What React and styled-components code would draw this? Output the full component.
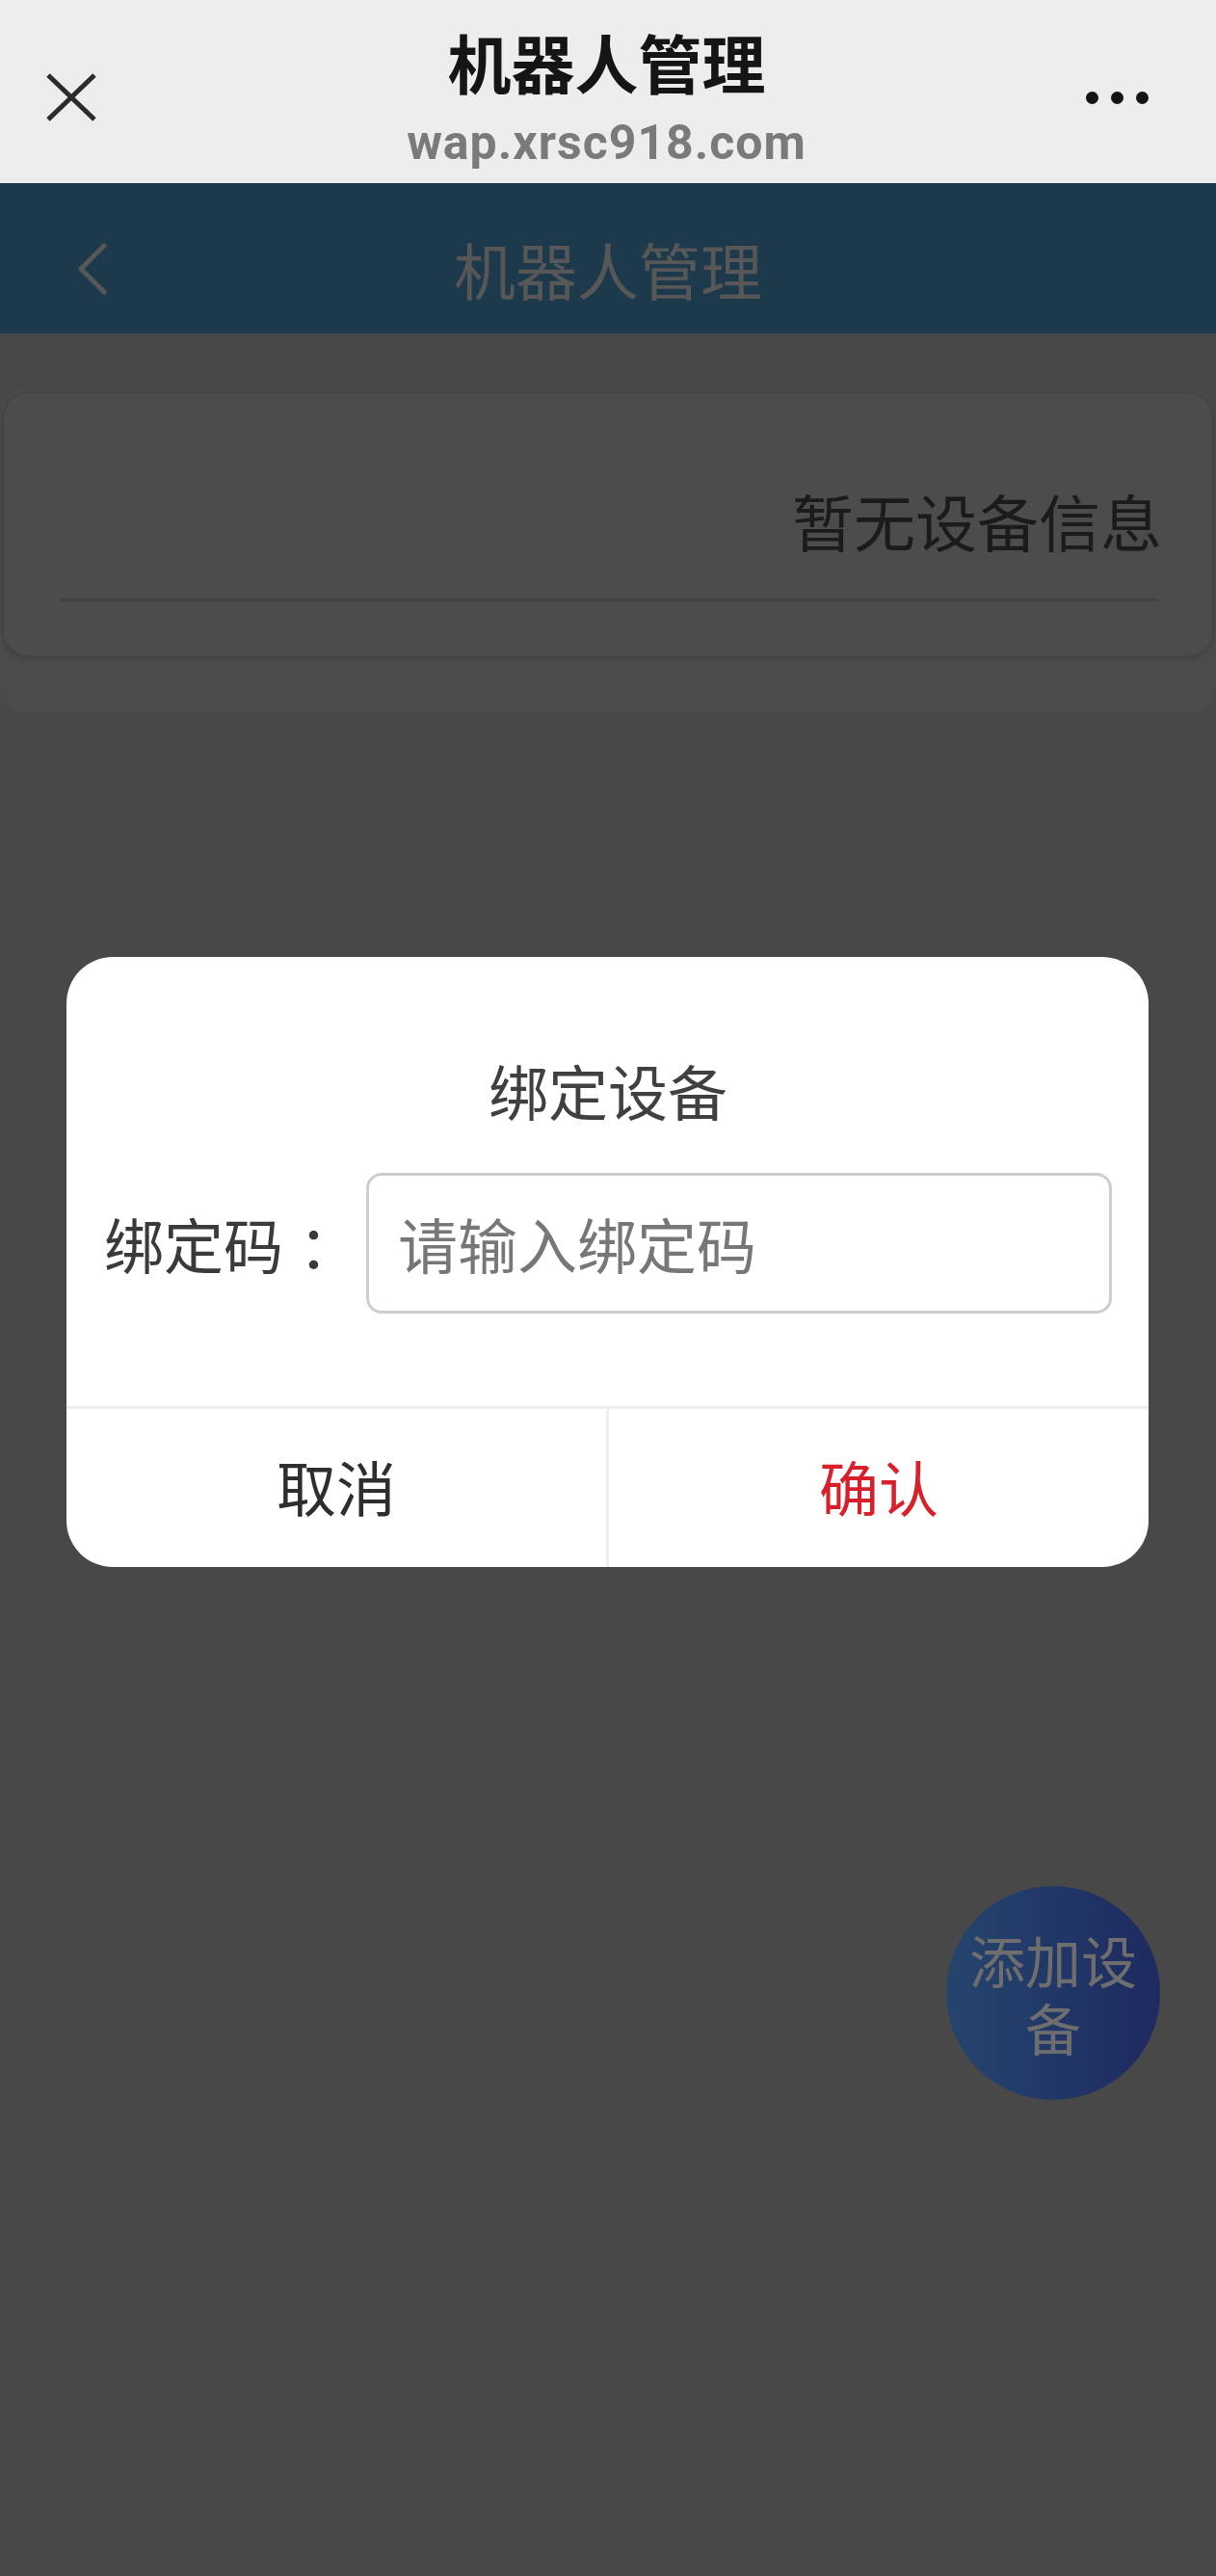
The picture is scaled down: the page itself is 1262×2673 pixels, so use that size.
import React from "react"
import styled, { createGlobalStyle } from "styled-components"

const GlobalStyle = createGlobalStyle`
  * {
    box-sizing: border-box;
  }

  body {
    margin: 0;
    font-family: "Noto Sans CJK SC", "Noto Sans", sans-serif;
    background-color: #484848;
  }
`

const Page = styled.div`
  position: relative;
  min-height: 2673px;
  background-color: #484848;
`

const BrowserBar = styled.header`
  display: flex;
  justify-content: space-between;
  align-items: center;
  height: 190px;
  padding: 0 70px 0 48px;
  background-color: #ededed;
`

const BarButton = styled.div`
  display: flex;
  align-items: center;
  justify-content: center;
  width: 52px;
  height: 52px;
  margin-top: 12px;
`

const Heading = styled.div`
  display: flex;
  flex-direction: column;
  align-items: center;
  padding-top: 11px;
  margin-left: 32px;

  .title {
    font-size: 66px;
    line-height: 76px;
    font-weight: 700;
    color: #151515;
  }

  .url {
    margin-top: 18px;
    font-family: Roboto, "Liberation Sans", sans-serif;
    font-size: 50px;
    line-height: 58px;
    font-weight: 700;
    letter-spacing: 1px;
    color: #7a7a7a;
  }
`

const Dots = styled.div`
  display: flex;
  gap: 13px;
  margin-top: 12px;

  span {
    width: 13px;
    height: 13px;
    border-radius: 50%;
    background-color: #141414;
  }
`

const NavBar = styled.nav`
  display: flex;
  align-items: center;
  position: relative;
  height: 156px;
  padding: 22px 0 0 76px;
  background-color: #1c3a4b;

  .title {
    position: absolute;
    left: 0;
    right: 0;
    top: 20px;
    bottom: 0;
    display: flex;
    align-items: center;
    justify-content: center;
    font-size: 64px;
    color: #575757;
    pointer-events: none;
  }
`

const Content = styled.main`
  padding-top: 57px;
`

const Panel = styled.section`
  height: 336px;
  padding: 3px 2px 0;
  border-radius: 26px;
  background-color: #4b4b4b;
`

const DeviceCard = styled.div`
  height: 276px;
  padding: 0 56px 0 58px;
  border: 2px solid #454545;
  border-radius: 28px;
  background-color: #4c4c4c;
  box-shadow: 0 2px 4px rgba(0, 0, 0, 0.12);
`

const EmptyRow = styled.div`
  padding: 93px 0 44px 0;
  border-bottom: 3px solid #424242;
  text-align: right;
  font-size: 64px;
  line-height: 76px;
  color: #1b1b1b;

  span {
    margin-right: -4px;
  }
`

const Fab = styled.button`
  position: absolute;
  right: 58px;
  top: 1957px;
  width: 222px;
  height: 222px;
  padding: 0 22px;
  border: none;
  border-radius: 50%;
  background: linear-gradient(90deg, #25456d 0%, #1e2a60 100%);
  font-family: "Noto Sans CJK SC", sans-serif;
  font-size: 58px;
  line-height: 70px;
  color: #6e6e6e;
`

const Overlay = styled.div`
  position: fixed;
  inset: 0;
  display: flex;
  align-items: center;
  justify-content: center;
  padding: 0 70px 54px 69px;
`

const Dialog = styled.div`
  width: 100%;
  height: 633px;
  display: flex;
  flex-direction: column;
  border-radius: 48px;
  background-color: #ffffff;
  overflow: hidden;
`

const DialogBody = styled.div`
  flex: 1;
  padding: 98px 38px 0 39px;

  h2 {
    margin: 0 0 46px;
    text-align: center;
    font-size: 62px;
    line-height: 80px;
    font-weight: 400;
    color: #404040;
  }
`

const Field = styled.label`
  display: flex;
  align-items: center;
  gap: 20px;

  .label {
    flex-shrink: 0;
    width: 252px;
    font-size: 62px;
    color: #3a3a3a;
    white-space: nowrap;
  }

  .colon {
    margin-left: 16px;
  }
`

const Input = styled.input`
  flex: 1;
  min-width: 0;
  height: 146px;
  padding: 0 30px;
  border: 3px solid #cdcdcd;
  border-radius: 16px;
  outline: none;
  font-family: "Noto Sans CJK SC", sans-serif;
  font-size: 62px;
  color: #333;

  &::placeholder {
    color: #777777;
  }
`

const Actions = styled.div`
  display: flex;
  height: 167px;
  border-top: 3px solid #eeeeee;
`

const Action = styled.button`
  flex: 1;
  padding: 0 0 4px;
  border: none;
  background: transparent;
  font-family: "Noto Sans CJK SC", sans-serif;
  font-size: 62px;
  color: ${(p) => (p.$primary ? "#d8202d" : "#2e2e2e")};

  & + & {
    border-left: 3px solid #eeeeee;
  }
`

const CloseIcon = () => (
  <svg width="52" height="52" viewBox="0 0 52 52">
    <path
      d="M2 3 L50 49 M50 3 L2 49"
      stroke="#2b2b2b"
      strokeWidth="5"
      fill="none"
    />
  </svg>
)

const BackIcon = () => (
  <svg width="40" height="56" viewBox="0 0 40 56">
    <path
      d="M32 4 L8 28 L32 52"
      stroke="#575757"
      strokeWidth="5"
      strokeLinecap="round"
      strokeLinejoin="round"
      fill="none"
    />
  </svg>
)

const App = () => (
  <Page>
    <GlobalStyle />
    <BrowserBar>
      <BarButton>
        <CloseIcon />
      </BarButton>
      <Heading>
        <div className="title">机器人管理</div>
        <div className="url">wap.xrsc918.com</div>
      </Heading>
      <Dots>
        <span />
        <span />
        <span />
      </Dots>
    </BrowserBar>

    <NavBar>
      <BackIcon />
      <div className="title">机器人管理</div>
    </NavBar>

    <Content>
      <Panel>
        <DeviceCard>
          <EmptyRow>
            <span>暂无设备信息</span>
          </EmptyRow>
        </DeviceCard>
      </Panel>
    </Content>

    <Fab>添加设备</Fab>

    <Overlay>
      <Dialog>
        <DialogBody>
          <h2>绑定设备</h2>
          <Field>
            <span className="label">
              绑定码<span className="colon">：</span>
            </span>
            <Input placeholder="请输入绑定码" />
          </Field>
        </DialogBody>
        <Actions>
          <Action>取消</Action>
          <Action $primary>确认</Action>
        </Actions>
      </Dialog>
    </Overlay>
  </Page>
)

export default App
